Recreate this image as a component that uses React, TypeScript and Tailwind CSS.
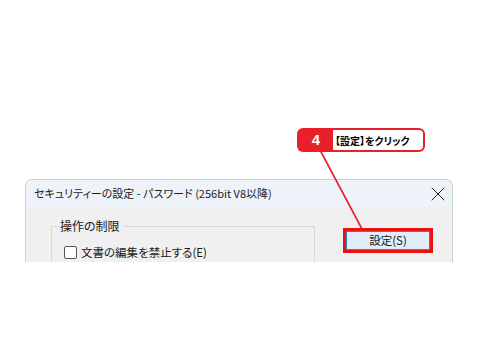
import { X } from "lucide-react"

const jp = "font-['Noto_Sans_CJK_JP',sans-serif] [font-feature-settings:'palt']"

const Callout = () => (
  <>
    <svg className="absolute left-0 top-0 pointer-events-none" width="480" height="360">
      <line x1="320" y1="150" x2="362" y2="229" stroke="#e8202a" strokeWidth="1.6" />
    </svg>
    <div className="absolute left-[297px] top-[128px] w-[128px] h-[24px] bg-[#e8202a] rounded-[6px] flex p-[2px]">
      <span className="w-[34px] flex items-center justify-center text-white font-bold text-[15px] font-['Liberation_Sans',sans-serif]">
        4
      </span>
      <span className={`flex-1 bg-white rounded-r-[4px] flex items-center pl-[2px] text-[10px] font-bold text-black ${jp}`}>
        【設定】をクリック
      </span>
    </div>
  </>
)

export default function App() {
  return (
    <div className="relative w-[480px] h-[360px] bg-white overflow-hidden">
      <div className="ml-[25px] mt-[179px] w-[428px] h-[83px] overflow-hidden rounded-t-[7px] border-l border-r border-t border-[#c9d3c5] bg-[#f0f0f0] flex flex-col">
        <div className={`shrink-0 h-[27px] bg-[#eef3f9] flex items-center justify-between pl-[8px] pr-[2px] text-[11px] text-[#1a1a1a] ${jp}`}>
          <span>セキュリティーの設定 - パスワード (256bit V8以降)</span>
          <X size={24} strokeWidth={1} className="text-[#222]" />
        </div>
        <div className="flex pl-[25px] pt-[10px]">
          <fieldset className="shrink-0 w-[264px] h-[60px] border border-[#d9d9d9] px-[12px] pt-[9px]">
            <legend className={`px-[3px] -ml-[7px] text-[12px] text-[#1a1a1a] ${jp}`}>操作の制限</legend>
            <label className={`flex items-center gap-[4px] text-[11.5px] text-[#1a1a1a] ${jp}`}>
              <span className="w-[13px] h-[13px] border border-[#555] rounded-[2px] bg-white" />
              文書の編集を禁止する(E)
            </label>
          </fieldset>
          <div className="ml-[28px] mt-[11px] w-[90px] h-[25px] border-[3px] border-[#ee1111]">
            <div className={`w-full h-full bg-[#e0eef9] border border-[#3a7fcf] flex items-center justify-center text-[11.5px] text-[#1a1a1a] ${jp}`}>
              設定(S)
            </div>
          </div>
        </div>
      </div>
      <Callout />
    </div>
  )
}
